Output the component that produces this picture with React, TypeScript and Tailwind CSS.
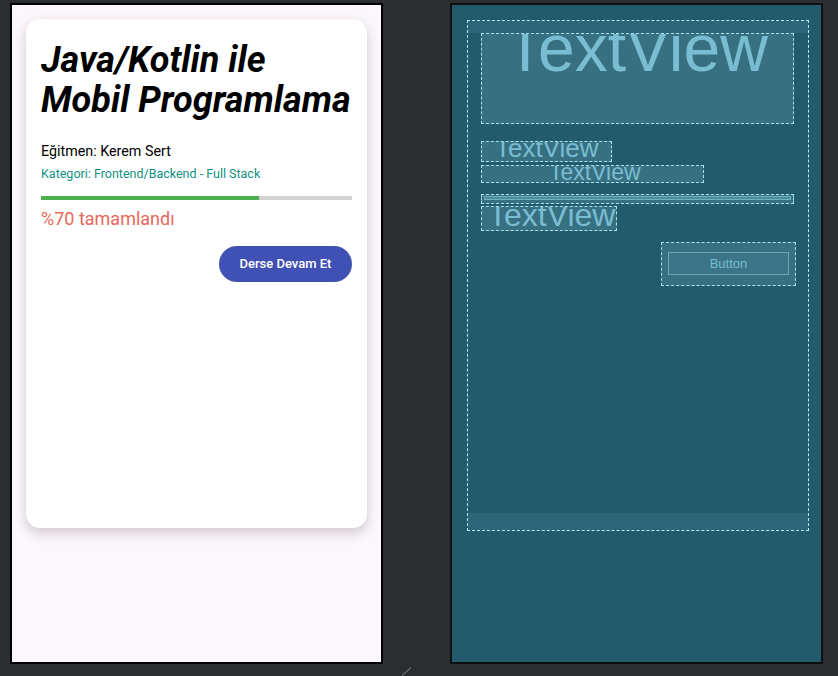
import React from "react";

const Box: React.FC<{ className?: string; children?: React.ReactNode }> = ({ className = "", children }) => (
  <div className={`overflow-hidden border border-dashed border-[#a8e2f1] bg-[#377081] ${className}`}>{children}</div>
);

function DesignPreview() {
  return (
    <div className="w-[373px] h-[661px] shrink-0 border-2 border-black bg-[#fcf7fc] p-[14px]">
      <div className="w-[341px] h-[509px] rounded-[14px] bg-white px-[15px] pt-[14px] shadow-[0_5px_12px_rgba(60,40,60,0.22)]">
        {/* title */}
        <h1 className="h-[91px] pt-[7px] text-[36px] leading-[40px] font-bold italic text-black">
          Java/Kotlin ile
          <br />
          Mobil Programlama
        </h1>
        <p className="mt-[17px] h-[21px] text-[14.3px] leading-[21px] text-black">Eğitmen: Kerem Sert</p>
        <p className="mt-[3px] h-[18px] text-[12.5px] leading-[18px] text-[#119182]">
          Kategori: Frontend/Backend - Full Stack
        </p>
        <div className="mt-[11px] h-[10px] pt-[2px]">
          <div className="flex h-[4px] w-full bg-[#d2d2d2]">
            <div className="h-full w-[70%] bg-[#4caf50]" />
          </div>
        </div>
        <p className="mt-[2px] h-[25px] text-[18px] leading-[25px] text-[#e8685a]">%70 tamamlandı</p>
        <div className="mt-[11px] flex h-[44px] items-center justify-end">
          <button className="h-[36px] w-[133px] rounded-full bg-[#3f51b5] text-[13px] font-medium text-white">
            Derse Devam Et
          </button>
        </div>
      </div>
    </div>
  );
}

function BlueprintPreview() {
  return (
    <div className="w-[373px] h-[661px] shrink-0 border-2 border-[#0e0f10] bg-[#235b6d] pl-[15px] pt-[15px] font-['Liberation_Sans',sans-serif] text-[#79bdd2]">
      <div className="flex w-[342px] h-[511px] flex-col border border-dashed border-[#b4ecf8]">
        <div className="h-[12px] bg-[#2d6679]" />
        <div className="flex flex-col px-[13px]">
          <Box className="h-[91px] w-[313px] pl-[23px]">
            <div className="text-[66px] leading-[29px]">TextView</div>
          </Box>
          <Box className="mt-[17px] h-[21px] w-[131px] pl-[13px]">
            <div className="text-[26px] leading-[12px]">TextView</div>
          </Box>
          <Box className="mt-[3px] h-[18px] w-[223px] pl-[67px]">
            <div className="text-[23px] leading-[13px]">TextView</div>
          </Box>
          <Box className="mt-[11px] h-[10px] w-[313px] px-[2px] pt-[1px]">
            <div className="h-[4px] border border-[#6fb0c3] bg-[#4f8c9e]" />
          </Box>
          <Box className="mt-[2px] h-[25px] w-[136px] pl-[6px]">
            <div className="text-[32px] leading-[17px]">TextView</div>
          </Box>
          <Box className="ml-auto mr-[-1px] mt-[11px] h-[44px] w-[135px] px-[6px] pt-[9px]">
            <div className="flex h-[23px] items-center justify-center border border-[#6aa7b9] bg-[#3b7587] text-[13px] leading-none">
              Button
            </div>
          </Box>
        </div>
        <div className="mt-auto h-[17px] bg-[#2d6679]" />
      </div>
    </div>
  );
}

export default function App() {
  return (
    <div className="relative w-[838px] h-[676px] overflow-hidden bg-[#2b2d30] font-['Roboto',sans-serif]">
      <div className="flex gap-[67px] pl-[10px] pt-[3px]">
        <DesignPreview />
        <BlueprintPreview />
      </div>
      {/* resize handle */}
      <svg className="absolute left-[400px] top-[665px]" width="14" height="11" viewBox="0 0 14 11">
        <line x1="2" y1="10.5" x2="11" y2="2.5" stroke="#8a8c90" strokeWidth="1" />
      </svg>
    </div>
  );
}
